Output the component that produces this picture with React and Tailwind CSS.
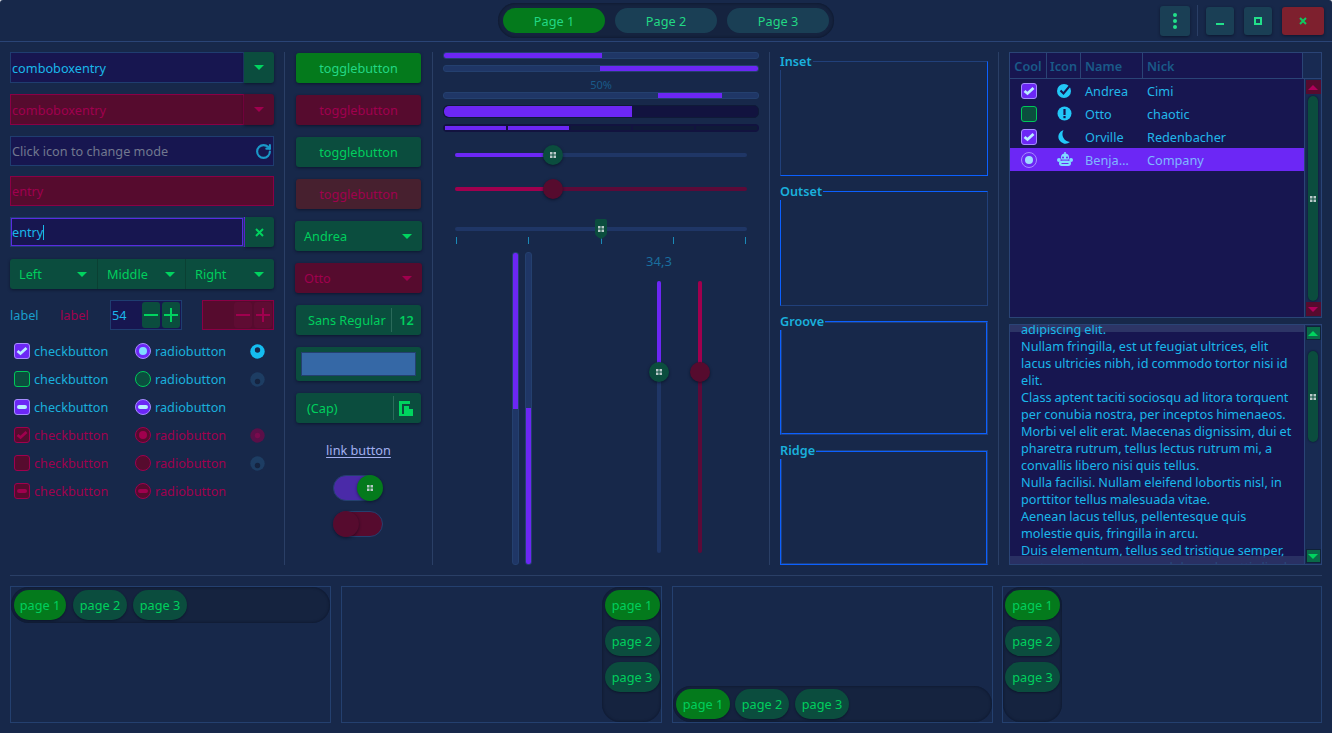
import React from "react";
import { RotateCw } from "lucide-react";

const shadow = "shadow-[0_1px_3px_rgba(5,10,25,0.55)]";

function Tri({ up = false, color = "#00d45f", w = 10, h = 5 }) {
  return (
    <svg width={w} height={h} viewBox="0 0 10 5" className="shrink-0">
      <path d={up ? "M0 5 L5 0 L10 5 Z" : "M0 0 L10 0 L5 5 Z"} fill={color} />
    </svg>
  );
}

function Dots({ color = "#b9c9c9" }) {
  return (
    <svg width="6" height="6" viewBox="0 0 6 6" className="shrink-0">
      <rect x="0" y="0" width="2.5" height="2.5" fill={color} />
      <rect x="3.5" y="0" width="2.5" height="2.5" fill={color} />
      <rect x="0" y="3.5" width="2.5" height="2.5" fill={color} />
      <rect x="3.5" y="3.5" width="2.5" height="2.5" fill={color} />
    </svg>
  );
}

function CheckMark({ color = "#b8ecff" }) {
  return (
    <svg width="12" height="10" viewBox="0 0 12 10">
      <path d="M1.5 5 L4.5 7.5 L10.5 2" fill="none" stroke={color} strokeWidth="2.8" />
    </svg>
  );
}

function CheckBox({ kind }) {
  if (kind === "on")
    return (
      <span className="w-[16px] h-[16px] rounded-[3px] border border-[#a58cff] bg-[#6c27f5] flex items-center justify-center shrink-0">
        <CheckMark />
      </span>
    );
  if (kind === "off")
    return <span className="w-[16px] h-[16px] rounded-[3px] border border-[#00c85a] bg-[#0b4d3e] block shrink-0" />;
  if (kind === "mix")
    return (
      <span className="w-[16px] h-[16px] rounded-[3px] border border-[#a58cff] bg-[#6c27f5] flex items-center justify-center shrink-0">
        <span className="w-[10px] h-[4px] rounded-[2px] bg-[#b8ecff] block" />
      </span>
    );
  if (kind === "xon")
    return (
      <span className="w-[16px] h-[16px] rounded-[3px] border border-[#a0004e] bg-[#560b2e] flex items-center justify-center shrink-0">
        <CheckMark color="#a0004e" />
      </span>
    );
  if (kind === "xoff")
    return <span className="w-[16px] h-[16px] rounded-[3px] border border-[#a0004e] bg-[#560b2e] block shrink-0" />;
  return (
    <span className="w-[16px] h-[16px] rounded-[3px] border border-[#a0004e] bg-[#560b2e] flex items-center justify-center shrink-0">
      <span className="w-[10px] h-[4px] rounded-[2px] bg-[#a0004e] block" />
    </span>
  );
}

function Radio({ kind }) {
  if (kind === "on")
    return (
      <span className="w-[16px] h-[16px] rounded-full border border-[#a58cff] bg-[#6c27f5] flex items-center justify-center shrink-0">
        <span className="w-[8px] h-[8px] rounded-full bg-[#7fdcff] block" />
      </span>
    );
  if (kind === "off")
    return <span className="w-[16px] h-[16px] rounded-full border border-[#00c85a] bg-[#0b4d3e] block shrink-0" />;
  if (kind === "mix")
    return (
      <span className="w-[16px] h-[16px] rounded-full border border-[#a58cff] bg-[#6c27f5] flex items-center justify-center shrink-0">
        <span className="w-[10px] h-[4px] rounded-[2px] bg-[#b8ecff] block" />
      </span>
    );
  if (kind === "xon")
    return (
      <span className="w-[16px] h-[16px] rounded-full border border-[#a0004e] bg-[#560b2e] flex items-center justify-center shrink-0">
        <span className="w-[8px] h-[8px] rounded-full bg-[#a0004e] block" />
      </span>
    );
  if (kind === "xoff")
    return <span className="w-[16px] h-[16px] rounded-full border border-[#a0004e] bg-[#560b2e] block shrink-0" />;
  return (
    <span className="w-[16px] h-[16px] rounded-full border border-[#a0004e] bg-[#560b2e] flex items-center justify-center shrink-0">
      <span className="w-[10px] h-[4px] rounded-[2px] bg-[#a0004e] block" />
    </span>
  );
}

function Spinner({ outer, inner, cy = 9 }) {
  return (
    <svg width="15" height="15" viewBox="0 0 15 15" className="shrink-0">
      <circle cx="7.5" cy="7.5" r="7.2" fill={outer} />
      <circle cx="7.5" cy={cy} r="2.7" fill={inner} />
    </svg>
  );
}

function CheckRow({ c, r, s, dis }) {
  const tc = dis ? "text-[#a0004e]" : "text-[#1ab0dc]";
  return (
    <div className={"h-[28px] flex items-center pl-[4px] " + tc}>
      <div className="w-[121px] flex items-center gap-[4px]">
        <CheckBox kind={c} />
        <span>checkbutton</span>
      </div>
      <div className="w-[115px] flex items-center gap-[4px]">
        <Radio kind={r} />
        <span>radiobutton</span>
      </div>
      {s}
    </div>
  );
}

function Btn({ className = "", children }) {
  return (
    <div className={"rounded-[3px] flex items-center justify-center " + shadow + " " + className}>
      {children}
    </div>
  );
}

function VSep() {
  return <div className="w-px bg-[#2a3f66] mx-[10px] shrink-0" />;
}

function Frame({ label, variant, className = "" }) {
  const outer = {
    inset: "border-t-[#21407a] border-l-[#21407a] border-r-[#0b60ff] border-b-[#0b60ff]",
    outset: "border-t-[#0b60ff] border-l-[#0b60ff] border-r-[#21407a] border-b-[#21407a]",
    groove: "border-t-[#0b60ff] border-l-[#0b60ff] border-r-[#21407a] border-b-[#21407a]",
    ridge: "border-t-[#21407a] border-l-[#0b60ff] border-r-[#21407a] border-b-[#0b60ff]",
  }[variant];
  const inner =
    variant === "groove"
      ? "border border-t-[#21407a] border-l-[#21407a] border-r-[#0b60ff] border-b-[#0b60ff]"
      : variant === "ridge"
      ? "border border-t-[#0b60ff] border-l-[#21407a] border-r-[#0b60ff] border-b-[#21407a]"
      : "";
  return (
    <div className={"relative h-[115px] border " + outer + " " + className}>
      <div className={"h-full w-full " + inner} />
      <span className="absolute left-[-1px] top-[-9px] bg-[#17284a] font-semibold text-[#1ab0dc] leading-[17px] pr-[1px]">
        {label}
      </span>
    </div>
  );
}

function ScrollBtn({ up, dis }) {
  return (
    <div
      className={
        "w-[15px] h-[14px] flex items-center justify-center shrink-0 border " +
        (dis ? "bg-[#560b2e] border-[#560b2e]" : "bg-[#0a6a48] border-[#0f2238]")
      }
    >
      <Tri up={up} color={dis ? "#b0005a" : "#00d45f"} />
    </div>
  );
}

function ScrollBar({ dis, flexThumb }) {
  return (
    <div className="w-[17px] shrink-0 border-l border-[#2a4476] bg-[#182a52] flex flex-col items-center py-[1px]">
      <ScrollBtn up dis={dis} />
      <div className="flex-1 w-full relative">
        <div
          className={
            "absolute left-[3px] w-[10px] rounded-[5px] bg-[#0b4d3e] shadow-[0_0_2px_rgba(5,10,25,0.8)] flex items-center justify-center " +
            (flexThumb ? "top-[2px] bottom-[1px]" : "top-[11px] h-[91px]")
          }
        >
          <Dots />
        </div>
      </div>
      <ScrollBtn dis={dis} />
    </div>
  );
}

function Monkey() {
  return (
    <svg width="16" height="15" viewBox="0 0 16 15">
      <circle cx="8" cy="1" r="1" fill="#7fdcff" />
      <circle cx="8" cy="5.6" r="4" fill="#7fdcff" />
      <circle cx="2" cy="8" r="2" fill="#7fdcff" />
      <circle cx="14" cy="8" r="2" fill="#7fdcff" />
      <rect x="2" y="8.5" width="12" height="5.5" rx="2.7" fill="#7fdcff" />
      <circle cx="6" cy="5.4" r="1" fill="#6c27f5" />
      <circle cx="10" cy="5.4" r="1" fill="#6c27f5" />
      <rect x="3.5" y="7.6" width="9" height="1" fill="#6c27f5" />
      <rect x="4.5" y="11" width="7" height="1" fill="#6c27f5" />
    </svg>
  );
}

function TreeRow({ box, icon, name, nick, sel }) {
  return (
    <div
      className={
        "h-[23px] grid grid-cols-[37px_34px_62px_1fr] items-center " +
        (sel ? "bg-[#6c27f5] text-[#7fb8ff]" : "text-[#22b8ea]")
      }
    >
      <div className="flex justify-center pl-[1px]">{box}</div>
      <div className="flex justify-center pl-[1px]">{icon}</div>
      <div className="pl-[4px] whitespace-nowrap overflow-hidden">{name}</div>
      <div className="pl-[4px]">{nick}</div>
    </div>
  );
}

function HProg({ className = "", children }) {
  return (
    <div className={"relative h-[7px] rounded-[3px] bg-[#1f3666] border border-[#24406f] overflow-hidden " + className}>
      {children}
    </div>
  );
}

function VProg({ top, className = "" }) {
  return (
    <div className={"relative w-[7px] h-full rounded-[3px] bg-[#1f3666] border border-[#24406f] overflow-hidden " + className}>
      <div className={"absolute left-[-1px] right-[-1px] bg-[#6c27f5] " + (top ? "top-[-1px] h-[157px]" : "bottom-[-1px] h-[157px]")} />
    </div>
  );
}

function HSlider({ dis, className = "" }) {
  return (
    <div className={"relative h-[20px] mx-[12px] flex items-center " + className}>
      <div className={"w-full h-[4px] rounded-[2px] " + (dis ? "bg-[#5c0a38]" : "bg-[#1f3666]")} />
      <div className={"absolute left-0 top-[8px] w-[98px] h-[4px] rounded-l-[2px] " + (dis ? "bg-[#a0004e]" : "bg-[#6c27f5]")} />
      <div
        className={
          "absolute left-[88px] top-0 w-[20px] h-[20px] rounded-full flex items-center justify-center shadow-[0_1px_3px_rgba(5,10,25,0.6)] " +
          (dis ? "bg-[#560b2e]" : "bg-[#0b4d3e]")
        }
      >
        {!dis && <Dots />}
      </div>
    </div>
  );
}

function VSlider({ dis, className = "" }) {
  return (
    <div className={"relative w-[20px] h-[272px] flex justify-center " + className}>
      <div className={"w-[4px] h-full rounded-[2px] " + (dis ? "bg-[#5c0a38]" : "bg-[#1f3666]")} />
      <div className={"absolute top-0 left-[8px] w-[4px] h-[91px] rounded-t-[2px] " + (dis ? "bg-[#a0004e]" : "bg-[#6c27f5]")} />
      <div
        className={
          "absolute left-0 top-[81px] w-[20px] h-[20px] rounded-full flex items-center justify-center shadow-[0_1px_3px_rgba(5,10,25,0.6)] " +
          (dis ? "bg-[#560b2e]" : "bg-[#0b4d3e]")
        }
      >
        {!dis && <Dots />}
      </div>
    </div>
  );
}

function PTab({ on, className = "", children }) {
  return (
    <div
      className={
        "h-[30px] rounded-[15px] flex items-center justify-center text-[#00cf5d] shrink-0 shadow-[0_1px_2px_rgba(5,10,25,0.5)] " +
        (on ? "bg-[#047a1c] " : "bg-[#0b4d3e] ") +
        className
      }
    >
      {children}
    </div>
  );
}

const lines = [
  "adipiscing elit.",
  "Nullam fringilla, est ut feugiat ultrices, elit",
  "lacus ultricies nibh, id commodo tortor nisi id",
  "elit.",
  "Class aptent taciti sociosqu ad litora torquent",
  "per conubia nostra, per inceptos himenaeos.",
  "Morbi vel elit erat. Maecenas dignissim, dui et",
  "pharetra rutrum, tellus lectus rutrum mi, a",
  "convallis libero nisi quis tellus.",
  "Nulla facilisi. Nullam eleifend lobortis nisl, in",
  "porttitor tellus malesuada vitae.",
  "Aenean lacus tellus, pellentesque quis",
  "molestie quis, fringilla in arcu.",
  "Duis elementum, tellus sed tristique semper,",
  "metus metus accumsan dolor, vel mattis ligula.",
];

export default function App() {
  return (
    <div className="w-[1332px] h-[733px] overflow-hidden bg-[#dfe3e8]">
      <div className="w-full h-full rounded-t-[3px] bg-[#17284a] flex flex-col font-['Noto_Sans',sans-serif] text-[12.7px] leading-[18px] overflow-hidden">
        {/* header */}
        <div className="h-[42px] shrink-0 border-b border-[#2a4476] flex items-center pr-[8px]">
          <div className="ml-[498px] w-[336px] h-[35px] rounded-[18px] bg-[#15233f] shadow-[inset_0_0_3px_rgba(5,10,25,0.6)] flex items-center gap-[10px] pl-[5px]">
            <div className="w-[102px] h-[25px] rounded-[13px] bg-[#047a1c] text-[#22d884] flex items-center justify-center">Page 1</div>
            <div className="w-[102px] h-[25px] rounded-[13px] bg-[#1a3f55] text-[#22d884] flex items-center justify-center">Page 2</div>
            <div className="w-[102px] h-[25px] rounded-[13px] bg-[#1a3f55] text-[#22d884] flex items-center justify-center">Page 3</div>
          </div>
          <div className="ml-auto flex items-center">
            <Btn className="w-[30px] h-[30px] bg-[#1a3f55]">
              <svg width="4" height="16" viewBox="0 0 4 16">
                <circle cx="2" cy="2" r="2" fill="#22e08a" />
                <circle cx="2" cy="8" r="2" fill="#22e08a" />
                <circle cx="2" cy="14" r="2" fill="#22e08a" />
              </svg>
            </Btn>
            <div className="w-px h-[31px] bg-[#2a3f66] ml-[7px]" />
            <Btn className="ml-[8px] w-[28px] h-[28px] bg-[#1a3f55]">
              <svg width="8" height="8" viewBox="0 0 8 8">
                <rect x="0" y="6" width="8" height="2" fill="#22e08a" />
              </svg>
            </Btn>
            <Btn className="ml-[10px] w-[28px] h-[28px] bg-[#1a3f55]">
              <svg width="8" height="8" viewBox="0 0 8 8">
                <rect x="1" y="1" width="6" height="6" fill="none" stroke="#22e08a" strokeWidth="2" />
              </svg>
            </Btn>
            <Btn className="ml-[10px] w-[42px] h-[28px] bg-[#7e202e]">
              <svg width="8" height="8" viewBox="0 0 8 8">
                <path d="M1 1 L7 7 M7 1 L1 7" stroke="#0fc860" strokeWidth="2" />
              </svg>
            </Btn>
          </div>
        </div>

        {/* main */}
        <div className="h-[533px] shrink-0 flex pl-[10px] pt-[10px] pb-[10px]">
          {/* col 1 */}
          <div className="w-[264px] shrink-0 flex flex-col">
            <div className="h-[31px] flex">
              <div className="w-[234px] border border-[#1f3d70] bg-[#171650] text-[#1ab8ea] flex items-center pl-[1px]">comboboxentry</div>
              <div className={"w-[30px] rounded-r-[3px] bg-[#0b4d3e] flex items-center justify-center " + shadow}>
                <Tri />
              </div>
            </div>
            <div className="h-[31px] flex mt-[11px]">
              <div className="w-[234px] border border-[#8a0045] bg-[#560b2e] text-[#a0004e] flex items-center pl-[1px]">comboboxentry</div>
              <div className={"w-[30px] rounded-r-[3px] bg-[#560b2e] flex items-center justify-center " + shadow}>
                <Tri color="#a0004e" />
              </div>
            </div>
            <div className="h-[30px] mt-[11px] border border-[#1f3d70] bg-[#171650] text-[#71788f] flex items-center justify-between pl-[1px] pr-[1px]">
              <span>Click icon to change mode</span>
              <RotateCw size={17} strokeWidth={3} color="#1a98c8" />
            </div>
            <div className="h-[30px] mt-[10px] border border-[#8a0045] bg-[#560b2e] text-[#a0004e] flex items-center pl-[1px]">entry</div>
            <div className="h-[30px] mt-[11px] flex">
              <div className="w-[234px] border border-[#1f3d70] shadow-[inset_0_0_0_1px_#5a2be0] bg-[#171650] text-[#1ab8ea] flex items-center pl-[1px]">
                entry<span className="w-px h-[15px] bg-[#1ab8ea] block" />
              </div>
              <div className="w-[1px] bg-[#6c27f5]" />
              <div className={"w-[29px] rounded-r-[3px] bg-[#0b4d3e] flex items-center justify-center " + shadow}>
                <svg width="9" height="9" viewBox="0 0 9 9">
                  <path d="M1 1 L8 8 M8 1 L1 8" stroke="#00d45f" strokeWidth="2" />
                </svg>
              </div>
            </div>
            <div className={"h-[30px] mt-[12px] rounded-[3px] bg-[#0b4d3e] flex text-[#00cf5d] " + shadow}>
              <div className="w-[88px] border-r border-[#0a4033] flex items-center justify-between pl-[9px] pr-[10px]">
                Left <Tri />
              </div>
              <div className="w-[88px] border-r border-[#0a4033] flex items-center justify-between pl-[9px] pr-[10px]">
                Middle <Tri />
              </div>
              <div className="flex-1 flex items-center justify-between pl-[9px] pr-[10px]">
                Right <Tri />
              </div>
            </div>
            <div className="h-[30px] mt-[11px] flex items-center">
              <span className="w-[50px] text-[#1a9fcc]">label</span>
              <span className="w-[50px] text-[#a0004e]">label</span>
              <div className="w-[72px] h-[30px] border border-[#1f3d70] bg-[#171650] flex items-center text-[#1ab8ea] pl-[1px]">
                <span className="w-[30px]">54</span>
                <div className="w-[18px] h-[26px] rounded-[3px] bg-[#0b4d3e] flex items-center justify-center">
                  <svg width="14" height="14" viewBox="0 0 14 14">
                    <rect x="0" y="6" width="14" height="2" fill="#00d45f" />
                  </svg>
                </div>
                <div className="ml-[2px] w-[18px] h-[26px] rounded-[3px] bg-[#0b4d3e] flex items-center justify-center">
                  <svg width="14" height="14" viewBox="0 0 14 14">
                    <path d="M0 7 H14 M7 0 V14" stroke="#00d45f" strokeWidth="2" />
                  </svg>
                </div>
              </div>
              <div className="ml-[20px] w-[72px] h-[30px] border border-[#8a0045] bg-[#560b2e] flex items-center justify-end pr-[1px]">
                <div className="w-[18px] h-[26px] rounded-[3px] bg-[#5f0c33] flex items-center justify-center">
                  <svg width="14" height="14" viewBox="0 0 14 14">
                    <rect x="0" y="6" width="14" height="2" fill="#a0004e" />
                  </svg>
                </div>
                <div className="ml-[2px] w-[18px] h-[26px] rounded-[3px] bg-[#5f0c33] flex items-center justify-center">
                  <svg width="14" height="14" viewBox="0 0 14 14">
                    <path d="M0 7 H14 M7 0 V14" stroke="#a0004e" strokeWidth="2" />
                  </svg>
                </div>
              </div>
            </div>
            <div className="mt-[7px] flex flex-col">
              <CheckRow c="on" r="on" s={<Spinner outer="#15bdf0" inner="#17284a" cy={6} />} />
              <CheckRow c="off" r="off" s={<Spinner outer="#1d3d63" inner="#15233f" cy={9.5} />} />
              <CheckRow c="mix" r="mix" />
              <CheckRow c="xon" r="xon" dis s={<Spinner outer="#5a0f48" inner="#7a0a4e" cy={7.5} />} />
              <CheckRow c="xoff" r="xoff" dis s={<Spinner outer="#1d3d63" inner="#15233f" cy={9.5} />} />
              <CheckRow c="xmix" r="xmix" dis />
            </div>
          </div>
          <VSep />

          {/* col 2 */}
          <div className="w-[127px] shrink-0 flex flex-col px-0 pt-[1px]">
            <Btn className="mx-[1px] h-[30px] bg-[#047a1c] text-[#22d884]">togglebutton</Btn>
            <Btn className="mx-[1px] h-[30px] mt-[12px] bg-[#560b2e] text-[#a0004e]">togglebutton</Btn>
            <Btn className="mx-[1px] h-[30px] mt-[12px] bg-[#0b4d3e] text-[#00cf5d]">togglebutton</Btn>
            <Btn className="mx-[1px] h-[30px] mt-[12px] bg-[#47202f] text-[#a0004e]">togglebutton</Btn>
            <Btn className="h-[30px] mt-[12px] bg-[#0b4d3e] text-[#00cf5d] !justify-between pl-[9px] pr-[10px]">
              Andrea <Tri />
            </Btn>
            <Btn className="h-[30px] mt-[12px] bg-[#560b2e] text-[#a0004e] !justify-between pl-[9px] pr-[10px]">
              Otto <Tri color="#a0004e" />
            </Btn>
            <Btn className="mx-[1px] h-[30px] mt-[12px] bg-[#0b4d3e] text-[#00cf5d] !justify-start pl-[12px]">
              <span className="w-[83px] whitespace-nowrap">Sans Regular</span>
              <span className="w-px h-[24px] bg-[#2a6a5a]" />
              <span className="flex-1 text-center font-semibold">12</span>
            </Btn>
            <Btn className="mx-[1px] h-[34px] mt-[12px] bg-[#0b4d3e] px-[5px] py-[5px]">
              <div className="w-full h-full bg-[#3568a6] border border-[#24406f]" />
            </Btn>
            <Btn className="mx-[1px] h-[30px] mt-[12px] bg-[#0b4d3e] text-[#00cf5d] !justify-start pl-[11px]">
              <span className="w-[86px]">(Cap)</span>
              <span className="w-px h-[24px] bg-[#2a6a5a]" />
              <svg width="14" height="15" viewBox="0 0 14 15" className="ml-[5px]">
                <path d="M0 0 H11 V3 H3 V13 H5 V15 H0 Z" fill="#00d45f" />
                <path d="M5 5 H10 V8 H14 V15 H5 Z" fill="#00d45f" />
              </svg>
            </Btn>
            <div className="mt-[18px] text-center text-[#a2b0f0] underline underline-offset-2">link button</div>
            <div className="mt-[16px] relative w-[50px] h-[26px] self-center mr-[2px]">
              <div className="absolute left-0 top-0 w-[49px] h-[26px] rounded-[13px] border border-[#24406f] bg-[#4a2aa8]" />
              <div className={"absolute left-[24px] top-0 w-[26px] h-[26px] rounded-full bg-[#047a1c] flex items-center justify-center " + shadow}>
                <Dots />
              </div>
            </div>
            <div className="mt-[10px] relative w-[50px] h-[26px] self-center mr-[2px]">
              <div className="absolute left-0 top-0 w-[50px] h-[26px] rounded-[13px] border border-[#24406f] bg-[#560b2e]" />
              <div className={"absolute left-0 top-0 w-[26px] h-[26px] rounded-full bg-[#560b2e] " + shadow} />
            </div>
          </div>
          <VSep />

          {/* col 3 */}
          <div className="w-[316px] shrink-0 flex flex-col">
            <HProg>
              <div className="absolute left-[-1px] top-[-1px] bottom-[-1px] w-[159px] bg-[#6c27f5]" />
            </HProg>
            <HProg className="mt-[6px]">
              <div className="absolute right-[-1px] top-[-1px] bottom-[-1px] w-[159px] bg-[#6c27f5]" />
            </HProg>
            <div className="h-[20px] pt-[6px] text-center text-[11px] leading-[14px] text-[#1a5a88]">50%</div>
            <HProg>
              <div className="absolute left-[214px] top-[-1px] bottom-[-1px] w-[64px] bg-[#6c27f5]" />
            </HProg>
            <div className="relative mt-[6px] h-[13px] rounded-[5px] bg-[#12133f] border border-[#0f1a38] overflow-hidden">
              <div className="absolute left-0 top-0 bottom-0 w-[188px] rounded-l-[5px] bg-[#6c27f5]" />
            </div>
            <div className="mt-[6px] h-[8px] rounded-[4px] bg-[#12133f] flex gap-[2px] px-[2px] py-[2px]">
              <div className="flex-1 bg-[#6c27f5]" />
              <div className="flex-1 bg-[#6c27f5]" />
              <div className="flex-1 bg-[#0f1a38]" />
              <div className="flex-1 bg-[#0f1a38]" />
              <div className="flex-1 bg-[#0f1a38]" />
            </div>
            <HSlider className="mt-[13px]" />
            <HSlider dis className="mt-[14px]" />
            <div className="relative h-[20px] mx-[12px] mt-[20px] flex items-center z-10">
              <div className="w-full h-[4px] rounded-[2px] bg-[#1f3666]" />
              <svg width="12" height="20" viewBox="0 0 12 20" className="absolute left-[140px] top-0">
                <path d="M0 2 Q0 0 2 0 H10 Q12 0 12 2 V14 Q12 17 6 20 Q0 17 0 14 Z" fill="#0b4d3e" />
                <g fill="#b9c9c9">
                  <rect x="3" y="7" width="2.5" height="2.5" />
                  <rect x="6.5" y="7" width="2.5" height="2.5" />
                  <rect x="3" y="10.5" width="2.5" height="2.5" />
                  <rect x="6.5" y="10.5" width="2.5" height="2.5" />
                </g>
              </svg>
            </div>
            <div className="mx-[13px] mt-[-2px] h-[7px] flex justify-between">
              <span className="w-px h-full bg-[#1a8ab8]" />
              <span className="w-px h-full bg-[#1a8ab8]" />
              <span className="w-px h-full bg-[#1a8ab8]" />
              <span className="w-px h-full bg-[#1a8ab8]" />
              <span className="w-px h-full bg-[#1a8ab8]" />
            </div>
            <div className="mt-[8px] h-[313px] flex">
              <VProg top className="ml-[69px]" />
              <VProg className="ml-[6px]" />
              <div className="ml-[107px] w-[40px] flex flex-col items-center">
                <div className="h-[29px] text-[#1a6e9e] text-[13px] leading-[18px]">34,3</div>
                <VSlider />
              </div>
              <div className="ml-[11px] pt-[29px]">
                <VSlider dis />
              </div>
            </div>
          </div>
          <VSep />

          {/* col 4 */}
          <div className="w-[208px] shrink-0 flex flex-col pt-[9px] gap-[15px]">
            <Frame label="Inset" variant="inset" />
            <Frame label="Outset" variant="outset" />
            <Frame label="Groove" variant="groove" />
            <Frame label="Ridge" variant="ridge" />
          </div>
          <VSep />

          {/* col 5 */}
          <div className="w-[313px] shrink-0 flex flex-col">
            <div className="h-[267px] border border-[#2a4476] bg-[#171650] flex flex-col">
              <div className="h-[26px] shrink-0 border-b border-[#2a4476] grid grid-cols-[37px_34px_62px_160px_1fr] font-semibold text-[#1a5a88] bg-[#171650]">
                <div className="border-r border-[#2a4476] flex items-center justify-center">Cool</div>
                <div className="border-r border-[#2a4476] flex items-center justify-center">Icon</div>
                <div className="border-r border-[#2a4476] flex items-center pl-[4px]">Name</div>
                <div className="border-r border-[#2a4476] flex items-center pl-[4px]">Nick</div>
                <div className="bg-[#182a52]" />
              </div>
              <div className="flex-1 flex min-h-0">
                <div className="flex-1 flex flex-col">
                  <TreeRow
                    box={<CheckBox kind="on" />}
                    icon={
                      <svg width="15" height="15" viewBox="0 0 15 15">
                        <circle cx="7" cy="8" r="7" fill="#22c8f8" />
                        <path d="M3.5 7.5 L6.5 10.5 L13.5 2" fill="none" stroke="#171650" strokeWidth="2" />
                      </svg>
                    }
                    name="Andrea"
                    nick="Cimi"
                  />
                  <TreeRow
                    box={<CheckBox kind="off" />}
                    icon={
                      <svg width="15" height="15" viewBox="0 0 15 15">
                        <circle cx="7.5" cy="7.5" r="7" fill="#22c8f8" />
                        <rect x="6.4" y="3" width="2.2" height="6" fill="#171650" />
                        <rect x="6.4" y="10" width="2.2" height="2.2" fill="#171650" />
                      </svg>
                    }
                    name="Otto"
                    nick="chaotic"
                  />
                  <TreeRow
                    box={<CheckBox kind="on" />}
                    icon={
                      <svg width="15" height="15" viewBox="0 0 15 15">
                        <path d="M6.5 1 A7 7 0 1 0 13 13 A8 8 0 0 1 6.5 1 Z" fill="#22c8f8" />
                      </svg>
                    }
                    name="Orville"
                    nick="Redenbacher"
                  />
                  <TreeRow
                    sel
                    box={
                      <span className="w-[16px] h-[16px] rounded-full border border-[#a58cff] flex items-center justify-center">
                        <span className="w-[8px] h-[8px] rounded-full bg-[#9fdcff] block" />
                      </span>
                    }
                    icon={<Monkey />}
                    name="Benja…"
                    nick="Company"
                  />
                </div>
                <ScrollBar dis flexThumb />
              </div>
            </div>
            <div className="mt-[6px] h-[241px] border border-[#2a4476] bg-[#171650] flex">
              <div className="relative flex-1 overflow-hidden pl-[11px] text-[#1ab8ea] leading-[17px] [word-spacing:-0.3px]">
                <div className="absolute left-0 right-0 top-0 h-[7px] bg-[#2d3566]" />
                <div className="relative mt-[-4px]">
                  {lines.map((l) => (
                    <div key={l} className="whitespace-nowrap">
                      {l}
                    </div>
                  ))}
                </div>
                <div className="absolute left-0 right-0 bottom-0 h-[8px] bg-[#2d3566]/85" />
              </div>
              <ScrollBar />
            </div>
          </div>
        </div>

        {/* bottom separator */}
        <div className="h-px shrink-0 mx-[10px] bg-[#2a3f66]" />

        {/* notebooks */}
        <div className="h-[137px] mt-[10px] mx-[10px] flex shrink-0">
          <div className="w-[321px] border border-[#24406f]">
            <div className="h-[36px] rounded-[18px] bg-[#15233f] shadow-[inset_0_0_3px_rgba(5,10,25,0.6)] flex items-center pl-[3px]">
              <PTab on className="w-[52px]">page 1</PTab>
              <PTab className="w-[54px] ml-[7px]">page 2</PTab>
              <PTab className="w-[54px] ml-[6px]">page 3</PTab>
            </div>
          </div>
          <div className="ml-[10px] w-[321px] border border-[#24406f] flex justify-end">
            <div className="w-[59px] rounded-[18px] bg-[#15233f] shadow-[inset_0_0_3px_rgba(5,10,25,0.6)] flex flex-col items-center pt-[3px] gap-[6px] pl-[1px]">
              <PTab on className="w-[55px]">page 1</PTab>
              <PTab className="w-[55px]">page 2</PTab>
              <PTab className="w-[55px]">page 3</PTab>
            </div>
          </div>
          <div className="ml-[10px] w-[321px] border border-[#24406f] flex flex-col justify-end">
            <div className="h-[36px] rounded-[18px] bg-[#15233f] shadow-[inset_0_0_3px_rgba(5,10,25,0.6)] flex items-center pl-[3px]">
              <PTab on className="w-[54px]">page 1</PTab>
              <PTab className="w-[54px] ml-[5px]">page 2</PTab>
              <PTab className="w-[54px] ml-[6px]">page 3</PTab>
            </div>
          </div>
          <div className="ml-[9px] w-[320px] border border-[#24406f] flex">
            <div className="w-[59px] rounded-[18px] bg-[#15233f] shadow-[inset_0_0_3px_rgba(5,10,25,0.6)] flex flex-col items-center pt-[3px] gap-[6px]">
              <PTab on className="w-[55px]">page 1</PTab>
              <PTab className="w-[55px]">page 2</PTab>
              <PTab className="w-[55px]">page 3</PTab>
            </div>
          </div>
        </div>
      </div>
    </div>
  );
}
